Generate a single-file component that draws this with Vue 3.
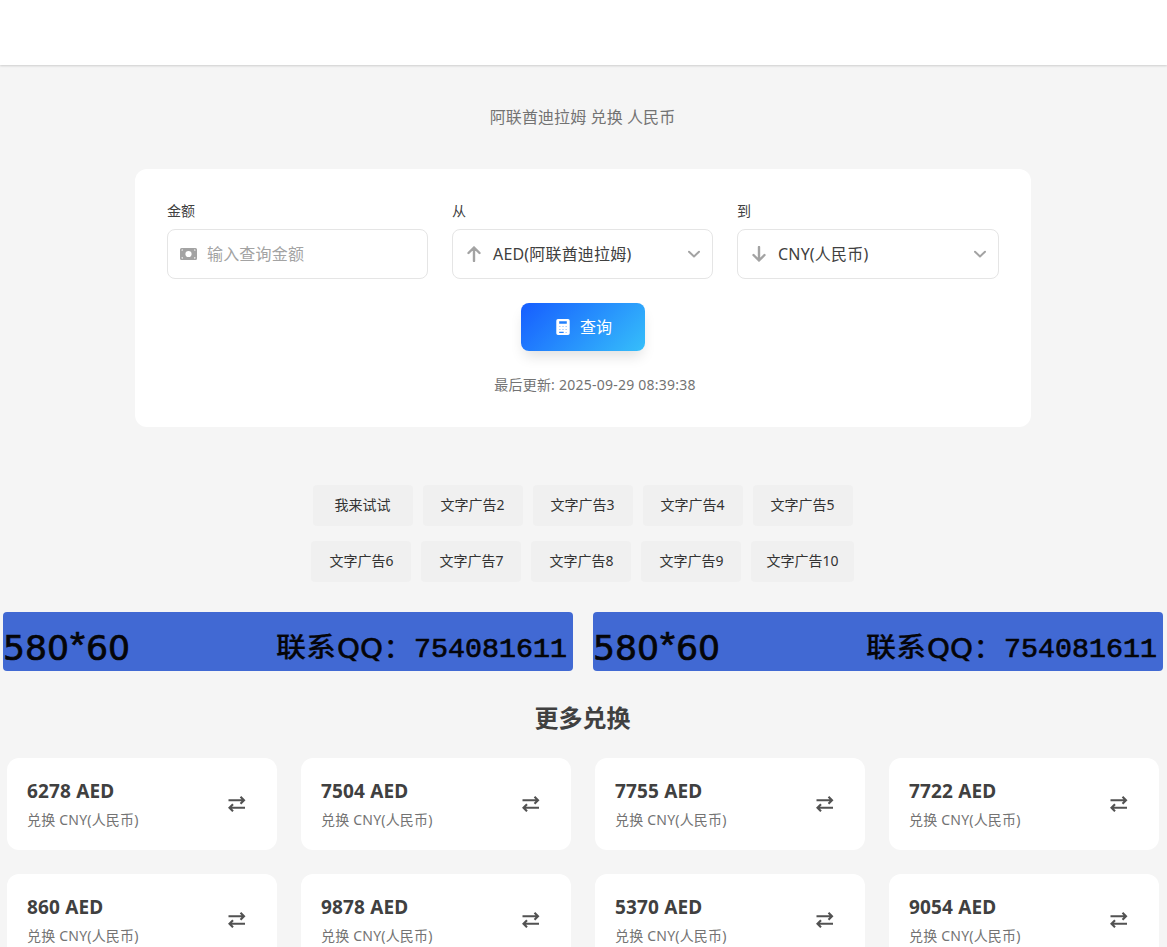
<script setup>
const adRows = [
  ['我来试试', '文字广告2', '文字广告3', '文字广告4', '文字广告5'],
  ['文字广告6', '文字广告7', '文字广告8', '文字广告9', '文字广告10'],
]
const amounts = [6278, 7504, 7755, 7722, 860, 9878, 5370, 9054]
</script>

<template>
  <div class="page">
    <header class="topbar"></header>
    <p class="subtitle">阿联酋迪拉姆 兑换 人民币</p>

    <section class="panel">
      <div class="fields">
        <div class="field">
          <label>金额</label>
          <div class="control">
            <svg class="icon money" viewBox="0 0 17 12">
              <path fill-rule="evenodd" d="M1.500 0h14A1.500 1.500 0 0 1 17 1.500v9a1.500 1.500 0 0 1-1.500 1.500h-14A1.500 1.500 0 0 1 0 10.500v-9A1.500 1.500 0 0 1 1.500 0zM8.500 2.900a3.100 3.100 0 1 0 0 6.200a3.100 3.100 0 0 0 0-6.200zM1.700 2.900a1.300 1.300 0 0 0 1.300-1.300H1.700zM15.300 2.900a1.300 1.300 0 0 1-1.300-1.300h1.300zM1.700 9.100a1.300 1.300 0 0 1 1.300 1.300H1.700zM15.300 9.100a1.300 1.300 0 0 0-1.300 1.300h1.300z" />
            </svg>
            <span class="placeholder">输入查询金额</span>
          </div>
        </div>
        <div class="field">
          <label>从</label>
          <div class="control">
            <svg class="icon arrow" viewBox="0 0 14 16"><path d="M7 15V1.500M1.500 7L7 1.500L12.500 7" /></svg>
            <span class="value">AED(阿联酋迪拉姆)</span>
            <svg class="chevron" viewBox="0 0 12 8"><path d="M1 1.700l5 4.700l5-4.700" /></svg>
          </div>
        </div>
        <div class="field">
          <label>到</label>
          <div class="control">
            <svg class="icon arrow" viewBox="0 0 14 16"><path d="M7 1v13.500M1.500 9L7 14.500L12.500 9" /></svg>
            <span class="value">CNY(人民币)</span>
            <svg class="chevron" viewBox="0 0 12 8"><path d="M1 1.700l5 4.700l5-4.700" /></svg>
          </div>
        </div>
      </div>
      <button class="submit" type="button">
        <svg class="calc" viewBox="0 0 14 16">
          <path fill-rule="evenodd" d="M2 0h10a1.700 1.700 0 0 1 1.700 1.700v12.600A1.700 1.700 0 0 1 12 16H2A1.700 1.700 0 0 1 .300 14.300V1.700A1.700 1.700 0 0 1 2 0zM3.200 2.200v2.600h7.600V2.200zM3.500 7.300v.700h.800V7.300zM6.600 7.300v.700h.800V7.300zM9.700 7.300v.700h.800V7.300zM3.500 10.100v.700h.800V10.100zM6.600 10.100v.700h.800V10.100zM9.700 10.100v.700h.800V10.100zM3.200 12.700v1.200h4.500v-1.200zM9.700 12.900v.800h.800v-.800z" />
        </svg>
        <span>查询</span>
      </button>
      <p class="updated">最后更新: 2025-09-29 08:39:38</p>
    </section>

    <nav class="ads">
      <div v-for="(row, r) in adRows" :key="r" class="ad-row">
        <a v-for="ad in row" :key="ad" class="ad">{{ ad }}</a>
      </div>
    </nav>

    <div class="banners">
      <svg v-for="n in 2" :key="n" class="banner" viewBox="0 0 570 59">
        <text class="size" x="0" y="48" textLength="66" lengthAdjust="spacingAndGlyphs">580</text>
        <text class="star" x="67" y="46" textLength="15" lengthAdjust="spacingAndGlyphs">*</text>
        <text class="size" x="83" y="48" textLength="44" lengthAdjust="spacingAndGlyphs">60</text>
        <text class="contact" x="273" y="45" textLength="60" lengthAdjust="spacingAndGlyphs">联系</text>
        <text class="latin" x="334" y="46" textLength="46" lengthAdjust="spacingAndGlyphs">QQ</text>
        <text class="contact" x="381" y="46">：</text>
        <text class="digits" x="411" y="45" textLength="153" lengthAdjust="spacingAndGlyphs">754081611</text>
      </svg>
    </div>

    <h2>更多兑换</h2>
    <div class="cards">
      <article v-for="amount in amounts" :key="amount" class="card">
        <div>
          <h3>{{ amount }} AED</h3>
          <p>兑换 CNY(人民币)</p>
        </div>
        <svg class="swap" viewBox="0 0 18 16">
          <path d="M.500 4.300H16M12.500 .800L16 4.300L12.500 7.800M17 11.800H1.500M5 8.300L1.500 11.800L5 15.300" />
        </svg>
      </article>
    </div>
  </div>
</template>

<style>
body {
  background: #f5f5f5;
  overflow: hidden;
}
</style>

<style scoped>
* {
  box-sizing: border-box;
}
.page {
  height: 947px;
  overflow: hidden;
  font-family: "Noto Sans", "Noto Sans CJK SC", sans-serif;
  color: #404040;
}
h2,
h3,
p {
  margin: 0;
}
.topbar {
  height: 65px;
  background: #fff;
  box-shadow: 0 1px 2px rgba(0, 0, 0, 0.16);
}
.subtitle {
  width: 1165px;
  margin-top: 40px;
  line-height: 24px;
  font-size: 16px;
  letter-spacing: 0.1px;
  color: #737373;
  text-align: center;
}
.panel {
  width: 896px;
  height: 258px;
  margin: 40px 0 0 135px;
  padding: 32px;
  border-radius: 12px;
  background: #fff;
}
.fields {
  display: grid;
  grid-template-columns: 261px 261px 262px;
  gap: 24px;
}
label {
  display: block;
  height: 20px;
  margin-bottom: 8px;
  line-height: 20px;
  font-size: 14px;
}
.control {
  display: flex;
  align-items: center;
  height: 50px;
  padding: 0 12px;
  border: 1px solid #e5e5e5;
  border-radius: 8px;
  font-size: 16px;
}
.icon {
  flex: none;
}
.money {
  width: 17px;
  height: 12px;
  margin-right: 10px;
  fill: #a3a3a3;
}
.arrow {
  width: 14px;
  height: 16px;
  margin: 0 12px 0 2px;
}
.arrow path,
.chevron path {
  fill: none;
  stroke: #a3a3a3;
  stroke-width: 2.4;
  stroke-linecap: round;
  stroke-linejoin: round;
}
.chevron path {
  stroke-width: 2;
}
.placeholder,
.value {
  padding-bottom: 2px;
  letter-spacing: 0.18px;
}
.placeholder {
  color: #a3a3a3;
}
.chevron {
  width: 12px;
  height: 8px;
  margin-left: auto;
}
.submit {
  display: flex;
  align-items: center;
  justify-content: center;
  gap: 10px;
  width: 124px;
  height: 48px;
  margin: 24px auto 0;
  padding: 0 0 0 2px;
  border: 0;
  border-radius: 8px;
  background: linear-gradient(135deg, #165dff, #36bffa);
  box-shadow: 0 8px 14px -3px rgba(0, 0, 0, 0.13);
  color: #fff;
  font: inherit;
  font-size: 16px;
}
.submit span {
  padding-bottom: 2px;
}
.calc {
  width: 14px;
  height: 16px;
  fill: #fff;
}
.updated {
  margin-top: 24px;
  padding-left: 24px;
  line-height: 20px;
  font-size: 14px;
  letter-spacing: 0.24px;
  color: #737373;
  text-align: center;
}
.ads {
  display: grid;
  gap: 15px;
  width: 1165px;
  margin-top: 58px;
}
.ad-row {
  display: flex;
  justify-content: center;
  gap: 10px;
}
.ad {
  min-width: 100px;
  height: 41px;
  padding: 0 15px;
  border-radius: 4px;
  background: #f0f0f0;
  color: #333;
  font-size: 14px;
  line-height: 40px;
  text-align: center;
}
.banners {
  display: flex;
  gap: 20px;
  margin: 30px 0 0 3px;
}
.banner {
  width: 570px;
  height: 59px;
  border-radius: 4px;
  background: #4169d3;
  fill: #050508;
}
.size {
  font: 34px "DejaVu Sans", sans-serif;
  stroke: #050508;
  stroke-width: 0.7;
}
.star {
  font: 36px "Liberation Sans", sans-serif;
  stroke: #050508;
  stroke-width: 0.7;
}
.contact {
  font: 500 27px "Noto Sans CJK SC", sans-serif;
  stroke: #050508;
  stroke-width: 0.2;
}
.latin {
  font: 26px "DejaVu Sans", sans-serif;
  stroke: #050508;
  stroke-width: 0.5;
}
.digits {
  font: 28px "Liberation Mono", monospace;
  stroke: #050508;
  stroke-width: 0.7;
}
h2 {
  width: 1165px;
  margin-top: 31px;
  line-height: 32px;
  font-size: 24px;
  font-weight: 700;
  text-align: center;
}
.cards {
  display: grid;
  grid-template-columns: repeat(4, 270px);
  gap: 24px;
  margin: 24px 0 0 7px;
}
.card {
  display: flex;
  align-items: center;
  justify-content: space-between;
  height: 92px;
  padding: 0 31px 0 20px;
  border-radius: 12px;
  background: #fff;
}
h3 {
  margin-top: -2px;
  line-height: 28px;
  font-size: 19px;
  letter-spacing: 0.15px;
  font-weight: 700;
}
.card p {
  margin: 5px 0 -1px;
  line-height: 20px;
  font-size: 14px;
  letter-spacing: 0.2px;
  color: #737373;
}
.swap {
  width: 18px;
  height: 16px;
}
.swap path {
  fill: none;
  stroke: #525252;
  stroke-width: 2.1;
}
</style>
